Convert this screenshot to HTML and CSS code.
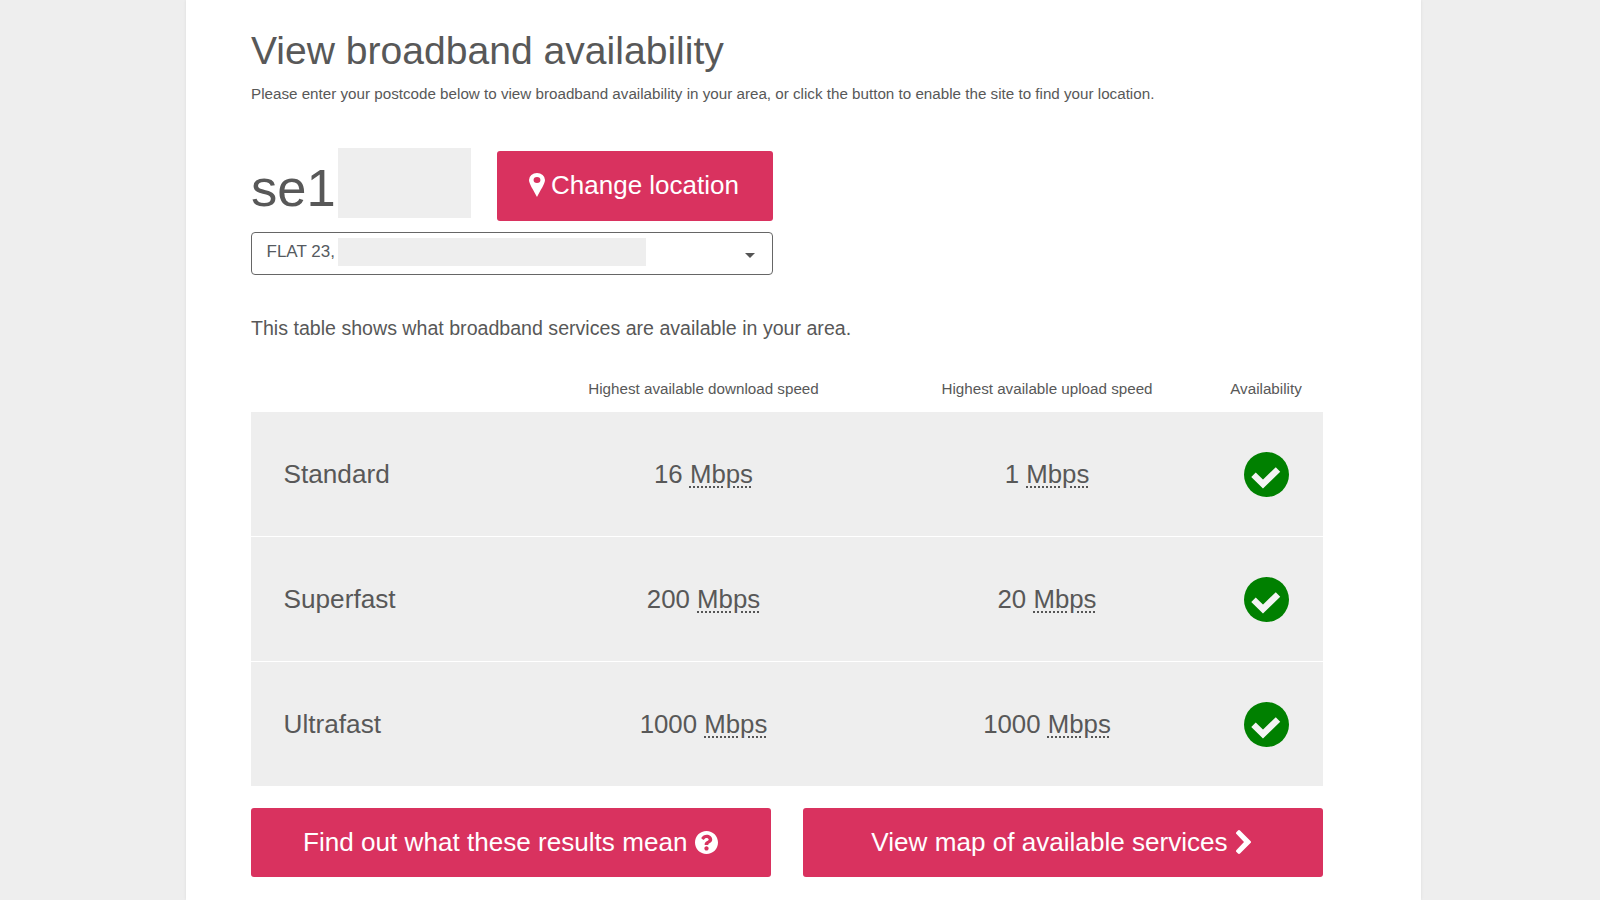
FILE: index.html
```html
<!DOCTYPE html>
<html lang="en">
<head>
<meta charset="utf-8">
<title>View broadband availability</title>
<link rel="stylesheet" href="styles.css">
</head>
<body>
<main class="panel">
  <h1 class="title">View broadband availability</h1>
  <p class="intro">Please enter your postcode below to view broadband availability in your area, or click the button to enable the site to find your location.</p>
  <div class="location">
    <div class="location-top">
      <div class="postcode"><span class="postcode-text">se1</span><span class="redact-postcode"></span></div>
      <button class="btn btn-change" type="button">
        <svg class="icon-pin" viewBox="0 0 14 24" preserveAspectRatio="none"><path fill="currentColor" fill-rule="evenodd" d="M7 0a7 7 0 0 1 7 7c0 4-4 10-7 17C4 17 0 11 0 7a7 7 0 0 1 7-7zm0 4a3 3 0 1 0 0 6 3 3 0 0 0 0-6z"/></svg>
        Change location
      </button>
    </div>
    <div class="select">
      <span class="select-text">FLAT 23,</span><span class="redact-address"></span>
      <span class="caret"></span>
    </div>
  </div>
  <p class="lead">This table shows what broadband services are available in your area.</p>
  <div class="table-head">
    <span></span>
    <span>Highest available download speed</span>
    <span>Highest available upload speed</span>
    <span class="head-avail">Availability</span>
  </div>
  <div class="table-body">
    <div class="row">
      <span class="name">Standard</span>
      <span class="speed">16 <abbr class="unit">Mbps</abbr></span>
      <span class="speed">1 <abbr class="unit">Mbps</abbr></span>
      <span class="avail"><svg class="icon-check" viewBox="0 0 45 45"><circle cx="22.5" cy="22.5" r="22.5" fill="#008000"/><polyline points="9.5,22.7 19,32 34,17.5" fill="none" stroke="#f4f4f4" stroke-width="6.4"/></svg></span>
    </div>
    <div class="row">
      <span class="name">Superfast</span>
      <span class="speed">200 <abbr class="unit">Mbps</abbr></span>
      <span class="speed">20 <abbr class="unit">Mbps</abbr></span>
      <span class="avail"><svg class="icon-check" viewBox="0 0 45 45"><circle cx="22.5" cy="22.5" r="22.5" fill="#008000"/><polyline points="9.5,22.7 19,32 34,17.5" fill="none" stroke="#f4f4f4" stroke-width="6.4"/></svg></span>
    </div>
    <div class="row">
      <span class="name">Ultrafast</span>
      <span class="speed">1000 <abbr class="unit">Mbps</abbr></span>
      <span class="speed">1000 <abbr class="unit">Mbps</abbr></span>
      <span class="avail"><svg class="icon-check" viewBox="0 0 45 45"><circle cx="22.5" cy="22.5" r="22.5" fill="#008000"/><polyline points="9.5,22.7 19,32 34,17.5" fill="none" stroke="#f4f4f4" stroke-width="6.4"/></svg></span>
    </div>
  </div>
  <div class="actions">
    <button class="btn btn-action" type="button">Find out what these results mean
      <svg class="icon-help" viewBox="8 8 496 496"><path fill="currentColor" d="M504 256c0 136.997-111.043 248-248 248S8 392.997 8 256C8 119.083 119.043 8 256 8s248 111.083 248 248zM262.655 90c-54.497 0-89.255 22.957-116.549 63.758-3.536 5.286-2.353 12.415 2.715 16.258l34.699 26.31c5.205 3.947 12.621 3.008 16.665-2.122 17.864-22.658 30.113-35.797 57.303-35.797 20.429 0 45.698 13.148 45.698 32.958 0 14.976-12.363 22.667-32.534 33.976C247.128 238.528 216 254.941 216 296v4c0 6.627 5.373 12 12 12h56c6.627 0 12-5.373 12-12v-1.333c0-28.462 83.186-29.647 83.186-106.667 0-58.002-60.165-102-116.531-102zM256 338c-25.365 0-46 20.635-46 46 0 25.364 20.635 46 46 46s46-20.636 46-46c0-25.365-20.635-46-46-46z"/></svg>
    </button>
    <button class="btn btn-action btn-map" type="button">View map of available services
      <svg class="icon-chevron" viewBox="0 0 15 24"><path fill="currentColor" d="M4 .5 14.5 11a1.4 1.4 0 0 1 0 2L4 23.5a1.4 1.4 0 0 1-2 0L.5 22a1.4 1.4 0 0 1 0-2L8 12 .5 4a1.4 1.4 0 0 1 0-2L2 .5a1.4 1.4 0 0 1 2 0z"/></svg>
    </button>
  </div>
</main>
</body>
</html>
```
FILE: styles.css
```css
* { box-sizing: border-box; }
html, body { height: 100%; }
body {
  margin: 0;
  background: #eeeeee;
  font-family: "Liberation Sans", Arial, sans-serif;
  color: #585858;
  overflow: hidden;
}
.panel {
  width: 1235px;
  height: 900px;
  margin-left: 186px;
  padding: 27px 98px 0 65px;
  background: #ffffff;
  box-shadow: 0 0 3px rgba(0, 0, 0, 0.08);
}
.title {
  margin: 0;
  font-size: 39.1px;
  line-height: 47px;
  font-weight: 400;
}
.intro {
  margin: 10px 0 0;
  font-size: 15.2px;
  line-height: 20px;
}
.location { width: 522px; margin-top: 44px; }
.location-top {
  display: flex;
  align-items: flex-start;
  justify-content: space-between;
}
.postcode { display: flex; align-items: flex-start; }
.postcode-text {
  font-size: 52.5px;
  height: 70px;
  line-height: 80px;
  width: 87px;
}
.redact-postcode {
  display: block;
  width: 133px;
  height: 70px;
  background: #eeeeee;
}
.btn {
  border: 0;
  border-radius: 3px;
  background: #d9325f;
  color: #ffffff;
  font-family: inherit;
  display: flex;
  align-items: center;
  justify-content: center;
}
.btn-change {
  width: 276px;
  height: 69.5px;
  margin-top: 3px;
  font-size: 26px;
  gap: 6px;
  padding-right: 8px;
}
.icon-pin { width: 16px; height: 24px; margin-top: -2px; }
.select {
  display: flex;
  align-items: center;
  height: 43px;
  margin-top: 11.5px;
  padding-left: 14.5px;
  border: 1.5px solid #666666;
  border-radius: 4px;
  position: relative;
  font-size: 17px;
}
.select-text { width: 71.5px; color: #555a60; margin-top: -4px; white-space: nowrap; }
.redact-address {
  display: block;
  width: 308px;
  height: 28px;
  margin-top: -3px;
  background: #eeeeee;
}
.caret {
  position: absolute;
  right: 17px;
  top: 20px;
  border-left: 5px solid transparent;
  border-right: 5px solid transparent;
  border-top: 5px solid #555555;
}
.lead {
  margin: 41px 0 0;
  font-size: 19.6px;
  line-height: 24px;
}
.table-head, .row {
  display: grid;
  grid-template-columns: 280px 345px 342px 104px;
  align-items: center;
  text-align: center;
}
.table-head {
  margin-top: 40px;
  height: 32px;
  font-size: 15.2px;
  padding-bottom: 16px;
}
.head-avail { white-space: nowrap; padding-right: 8px; }
.row {
  height: 124.8px;
  padding-top: 2px;
  background: #eeeeee;
  border-bottom: 1px solid #ffffff;
  font-size: 25.8px;
}
.row:last-child { border-bottom: 0; }
.name { text-align: left; padding-left: 32.5px; font-size: 26.2px; }
.unit {
  text-decoration: underline dotted #555555 2px;
  text-underline-offset: 3px;
}
.avail { display: flex; justify-content: center; padding-right: 8px; }
.icon-check { width: 45px; height: 45px; }
.actions {
  display: grid;
  grid-template-columns: 519.5px 520px;
  justify-content: space-between;
  margin-top: 22px;
}
.btn-action {
  height: 69px;
  font-size: 26.1px;
  gap: 8px;
}
.btn-map { padding-right: 10px; }
.icon-help { width: 23px; height: 23px; }
.icon-chevron { width: 15px; height: 24px; margin-top: -2px; }
```
